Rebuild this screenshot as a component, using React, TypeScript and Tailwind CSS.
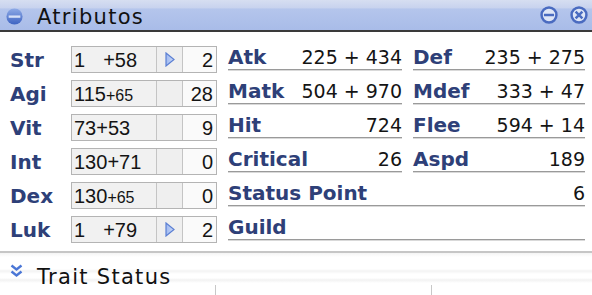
import React from 'react';

type StatRow = { name: string; base: string; bonus: string; split?: boolean; small?: boolean; up?: boolean; points: string };

const stats: StatRow[] = [
  { name: 'Str', base: '1', bonus: '+58', split: true, up: true, points: '2' },
  { name: 'Agi', base: '115', bonus: '+65', small: true, points: '28' },
  { name: 'Vit', base: '73', bonus: '+53', points: '9' },
  { name: 'Int', base: '130', bonus: '+71', points: '0' },
  { name: 'Dex', base: '130', bonus: '+65', small: true, points: '0' },
  { name: 'Luk', base: '1', bonus: '+79', split: true, up: true, points: '2' },
];

// middle / right cells, null = row spans both
const info: ([string, string] | null)[][] = [
  [['Atk', '225 + 434'], ['Def', '235 + 275']],
  [['Matk', '504 + 970'], ['Mdef', '333 + 47']],
  [['Hit', '724'], ['Flee', '594 + 14']],
  [['Critical', '26'], ['Aspd', '189']],
  [['Status Point', '6'], null],
  [['Guild', ''], null],
];

const label = "font-['DejaVu_Sans',sans-serif] font-bold text-[20px] text-[#2e4078]";
const value = "font-['DejaVu_Sans',sans-serif] text-[19px] text-[#141414]";

const TitleIcon = () => (
  <svg width="17" height="17" viewBox="0 0 16 16">
    <defs>
      <linearGradient id="ti" x1="0" y1="0" x2="0" y2="1">
        <stop offset="0" stopColor="#8eaae6" />
        <stop offset="1" stopColor="#3d63c2" />
      </linearGradient>
    </defs>
    <circle cx="8" cy="8" r="7.6" fill="url(#ti)" />
    <rect x="2.5" y="7" width="11" height="2.2" fill="#d6e0f7" />
  </svg>
);

const MinIcon = () => (
  <svg width="18" height="18" viewBox="0 0 16 16">
    <circle cx="8" cy="8" r="6.6" fill="#dfe6f6" stroke="#4a6bc0" strokeWidth="2.2" />
    <rect x="3.5" y="6.9" width="9" height="2.2" fill="#4a6bc0" />
  </svg>
);

const CloseIcon = () => (
  <svg width="18" height="18" viewBox="0 0 16 16">
    <circle cx="8" cy="8" r="6.6" fill="#dfe6f6" stroke="#4a6bc0" strokeWidth="2.2" />
    <path d="M5 5 L11 11 M11 5 L5 11" stroke="#4a6bc0" strokeWidth="2.2" />
  </svg>
);

const UpArrow = () => (
  <svg width="10" height="15" viewBox="0 0 10 15">
    <defs>
      <linearGradient id="ua" x1="0" y1="0" x2="1" y2="0">
        <stop offset="0" stopColor="#9fb9f0" />
        <stop offset="1" stopColor="#c9d8f8" />
      </linearGradient>
    </defs>
    <polygon points="1,1 9,7.5 1,14" fill="url(#ua)" stroke="#5b7fd3" strokeWidth="1.2" />
  </svg>
);

const Chevrons = () => (
  <svg width="13" height="14" viewBox="0 0 13 14">
    <path d="M1.5 1.5 L6.5 5.5 L11.5 1.5 M1.5 7.5 L6.5 11.5 L11.5 7.5" fill="none" stroke="#4a76d6" strokeWidth="2.4" />
  </svg>
);

const InfoCell: React.FC<{ name: string; val: string; w: string }> = ({ name, val, w }) => (
  <div className={`${w} h-[23px] mt-[4px] flex items-baseline justify-between border-b border-[#9a9a9a] shadow-[0_1px_0_#d9d9d9] box-content leading-[23px]`}>
    <span className={label}>{name}</span>
    <span className={value}>{val}</span>
  </div>
);

export default function App() {
  return (
    <div className="w-[592px] h-[295px] bg-white overflow-hidden relative">
      {/* title bar */}
      <div className="h-[32px] flex items-center bg-[linear-gradient(to_bottom,#d6def1_0%,#c8d3ee_26%,#b4c5ec_30%,#a9bce8_100%)] border-b-2 border-[#3a3a3a]">
        <div className="ml-[6px] mt-[3px]"><TitleIcon /></div>
        <span className="ml-[14px] pt-[4px] font-['DejaVu_Sans',sans-serif] text-[21px] tracking-[1.3px] text-[#111] leading-[27px]">Atributos</span>
        <div className="ml-auto mr-[4px] flex gap-[12px]">
          <MinIcon />
          <CloseIcon />
        </div>
      </div>

      <div className="pt-[10px]">
        {stats.map((s, i) => (
          <div key={s.name} className="flex h-[34px] items-start pl-[10px]">
            <span className={`${label} w-[61px] mt-[4px] leading-[28px]`}>{s.name}</span>
            <div className="w-[146px] h-[27px] mt-[4px] flex border border-[#b4b4b4] font-['Liberation_Sans',sans-serif] text-[20px] text-[#141414] leading-[26px]">
              <div className="w-[85px] bg-[#f1f1f1] border-r border-[#c4c4c4] pl-[2px] flex items-baseline">
                <span>{s.base}</span>
                <span className={`${s.split ? 'ml-[18px]' : ''} ${s.small ? 'text-[16px]' : ''}`}>{s.bonus}</span>
              </div>
              <div className="w-[26px] bg-[#efefef] border-r border-[#c4c4c4] flex items-center pl-[8px]">
                {s.up && <UpArrow />}
              </div>
              <div className="flex-1 bg-[#fafafa] text-right pr-[3px]">{s.points}</div>
            </div>
            {info[i][1] ? (
              <>
                <div className="ml-[11px]"><InfoCell name={info[i][0]![0]} val={info[i][0]![1]} w="w-[174px]" /></div>
                <div className="ml-[11px]"><InfoCell name={info[i][1]![0]} val={info[i][1]![1]} w="w-[172px]" /></div>
              </>
            ) : (
              <div className="ml-[11px]"><InfoCell name={info[i][0]![0]} val={info[i][0]![1]} w="w-[357px]" /></div>
            )}
          </div>
        ))}
      </div>

      {/* trait status header */}
      <div className="mt-[5px] border-t-2 border-[#c6c6c6] relative h-[45px] bg-[linear-gradient(to_bottom,#f4f4f4_0px,#ffffff_4px,#ffffff_16px,#f3f3f3_18px,#ffffff_21px,#ffffff_25px,#f2f2f2_27px,#ffffff_30px)]">
        <div className="flex items-start pl-[10px] pt-[9px]">
          <div className="mt-[2px]"><Chevrons /></div>
          <span className="ml-[14px] font-['DejaVu_Sans',sans-serif] text-[21px] tracking-[1.3px] text-[#111] leading-[30px]">Trait Status</span>
        </div>
        <div className="absolute left-[215px] top-[32px] w-px h-[10px] bg-[#c8c8c8]" />
        <div className="absolute left-[431px] top-[32px] w-px h-[10px] bg-[#c8c8c8]" />
      </div>
    </div>
  );
}
